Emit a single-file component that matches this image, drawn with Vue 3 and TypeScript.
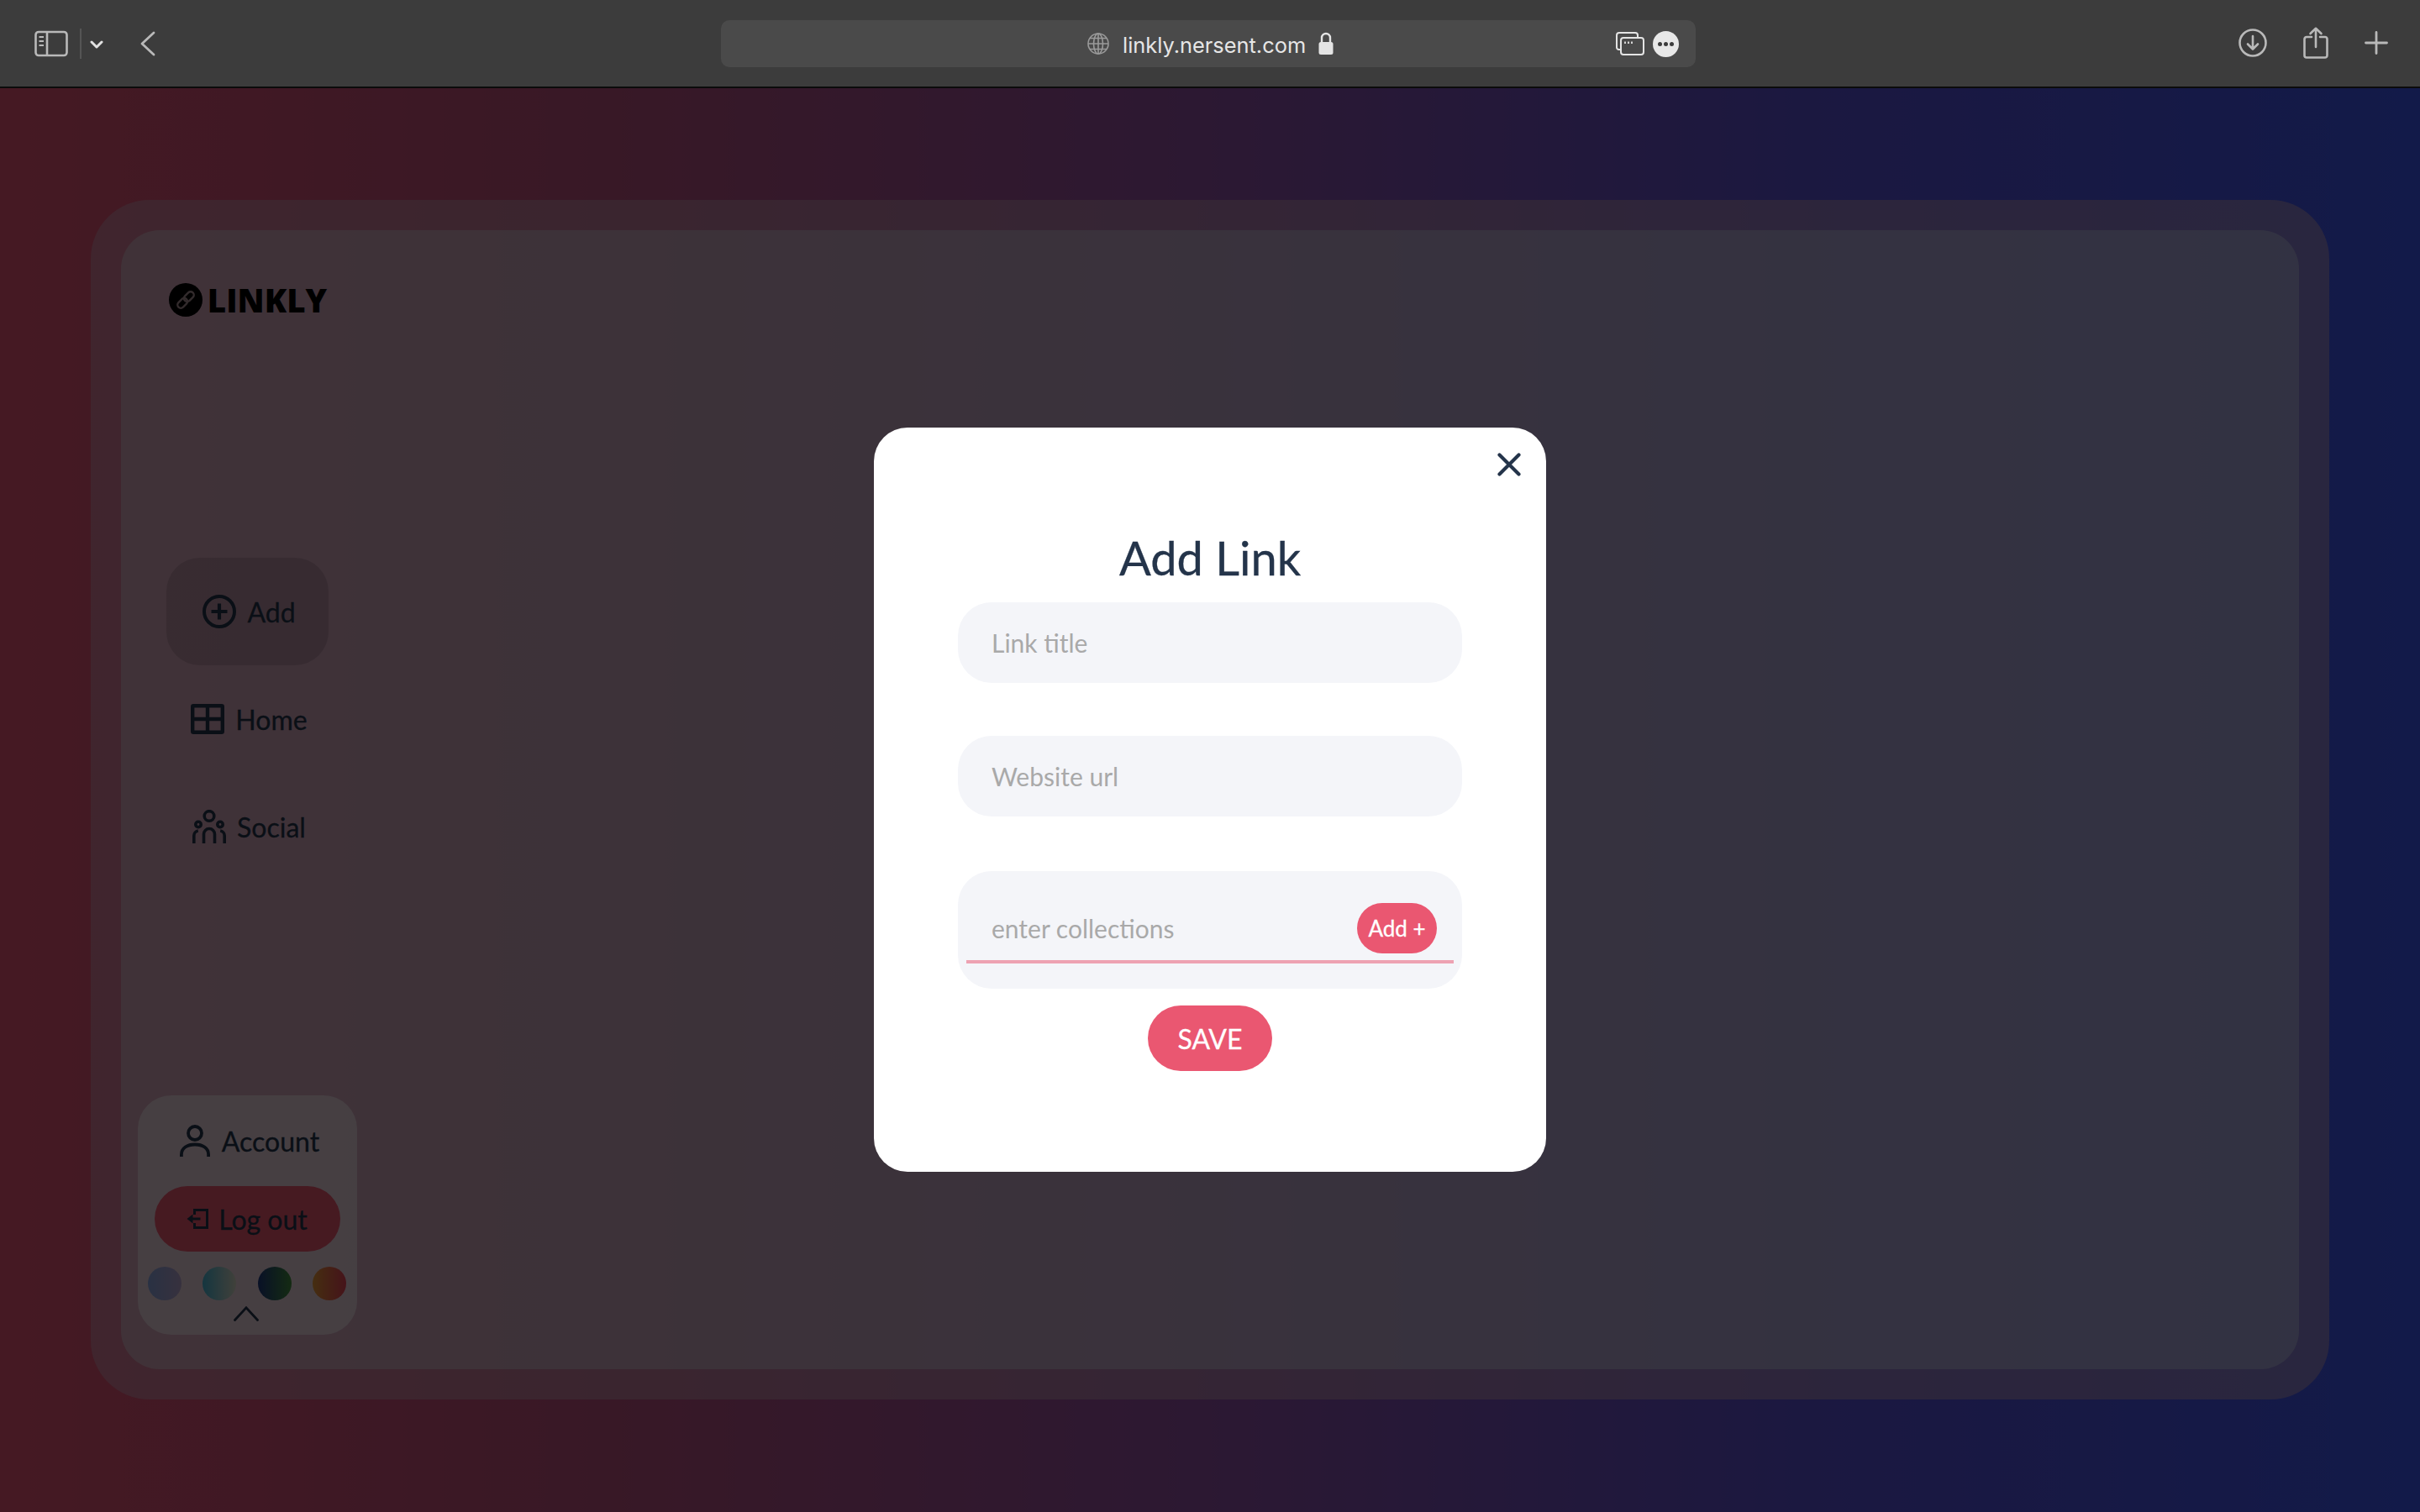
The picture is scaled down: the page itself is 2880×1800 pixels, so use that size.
<script setup lang="ts">
interface NavItem { label: string; icon: 'add' | 'home' | 'social'; active: boolean }
const navItems: NavItem[] = [
  { label: 'Add', icon: 'add', active: true },
  { label: 'Home', icon: 'home', active: false },
  { label: 'Social', icon: 'social', active: false },
]
const themes: string[] = ['theme-a', 'theme-b', 'theme-c', 'theme-d']
</script>

<template>
  <div class="window">
    <header class="toolbar">
      <div class="tb-left">
        <svg class="ic-sidebar" width="40" height="32" viewBox="0 0 40 32" fill="none" stroke="#b9b9b9" stroke-width="2.6">
          <rect x="1.5" y="2" width="37" height="28" rx="3.5" />
          <path d="M15 2V30" />
          <path d="M5.5 8H11M5.5 13H11M5.5 18H11" stroke-width="2" />
        </svg>
        <span class="tb-sep"></span>
        <svg class="ic-drop" width="16" height="10" viewBox="0 0 16 10" fill="none" stroke="#e2e2e2" stroke-width="3" stroke-linecap="round" stroke-linejoin="round">
          <path d="M2 2L8 8L14 2" />
        </svg>
        <svg class="ic-back" width="18" height="30" viewBox="0 0 18 30" fill="none" stroke="#b9b9b9" stroke-width="2.8" stroke-linecap="round" stroke-linejoin="round">
          <path d="M16 2L2 15L16 28" />
        </svg>
      </div>
      <div class="addr">
        <svg class="ic-globe" width="26" height="26" viewBox="0 0 26 26" fill="none" stroke="#9a9a9a" stroke-width="1.6">
          <circle cx="13" cy="13" r="12" />
          <ellipse cx="13" cy="13" rx="5.5" ry="12" />
          <path d="M13 1V25M1 13H25M3 6.5H23M3 19.5H23" />
        </svg>
        <span class="url">linkly.nersent.com</span>
        <svg class="ic-lock" width="20" height="28" viewBox="0 0 20 28" fill="none">
          <path d="M5 13V7a5 5 0 0 1 10 0v6" stroke="#e4e4e4" stroke-width="2.4" />
          <rect x="1.5" y="12" width="17" height="15" rx="2.5" fill="#e4e4e4" />
        </svg>
        <span class="addr-space"></span>
        <svg class="ic-tabs" width="34" height="28" viewBox="0 0 34 28" fill="none" stroke="#e4e4e4" stroke-width="2">
          <path d="M5 21H3.5A2.5 2.5 0 0 1 1 18.500V4A3 3 0 0 1 4 1H23a3 3 0 0 1 3 3V7" />
          <rect x="6" y="7" width="27" height="20" rx="3" fill="#4a4a4a" />
          <path d="M11 11.500V14M15 11.500V14M19 11.500V14" stroke-width="1.8" />
        </svg>
        <span class="more"><i></i><i></i><i></i></span>
      </div>
      <div class="tb-right">
        <svg width="34" height="34" viewBox="0 0 34 34" fill="none" stroke="#b9b9b9" stroke-width="2.6" stroke-linecap="round" stroke-linejoin="round">
          <circle cx="17" cy="17" r="15.500" />
          <path d="M17 9V24M11 18.500L17 24.500L23 18.500" />
        </svg>
        <svg width="30" height="38" viewBox="0 0 30 38" fill="none" stroke="#b9b9b9" stroke-width="2.6" stroke-linecap="round" stroke-linejoin="round">
          <path d="M10 12H4a2.500 2.500 0 0 0-2.500 2.500V34A2.500 2.500 0 0 0 4 36.500H26a2.500 2.500 0 0 0 2.500-2.500V14.500A2.500 2.500 0 0 0 26 12H20" />
          <path d="M15 2V24M8.500 8L15 1.800L21.500 8" />
        </svg>
        <svg width="28" height="28" viewBox="0 0 28 28" fill="none" stroke="#b9b9b9" stroke-width="2.8" stroke-linecap="round">
          <path d="M14 1.500V26.500M1.500 14H26.500" />
        </svg>
      </div>
    </header>

    <main class="page">
      <section class="outer">
        <div class="inner">
          <aside class="sidebar">
            <div class="logo">
              <span class="logo-mark">
                <svg width="26" height="26" viewBox="0 0 24 24" fill="none" stroke="#a88f94" stroke-width="2.200" stroke-linecap="round">
                  <g transform="rotate(45 12 12)">
                    <rect x="8.400" y="0.800" width="7.200" height="12.400" rx="3.600" />
                    <rect x="8.400" y="10.800" width="7.200" height="12.400" rx="3.600" />
                  </g>
                </svg>
              </span>
              <span class="logo-text">LINKLY</span>
            </div>

            <nav class="nav">
              <a v-for="item in navItems" :key="item.label" class="nav-item" :class="{ active: item.active }">
                <svg v-if="item.icon === 'add'" width="40" height="40" viewBox="0 0 40 40" fill="none" stroke="#24344a" stroke-width="4">
                  <circle cx="20" cy="20" r="18" />
                  <path d="M20 10.500V29.500M10.500 20H29.500" stroke-width="4.200" />
                </svg>
                <svg v-else-if="item.icon === 'home'" width="40" height="36" viewBox="0 0 40 36" fill="none" stroke="#24344a" stroke-width="4.400">
                  <rect x="2.200" y="2.200" width="35.600" height="31.600" rx="1" />
                  <path d="M20 2V34M2 18H38" />
                </svg>
                <svg v-else width="40" height="40" viewBox="0 0 40 40" fill="none" stroke="#24344a" stroke-width="3.600">
                  <circle cx="20" cy="7.500" r="5.800" />
                  <circle cx="7" cy="17.500" r="3.200" />
                  <circle cx="33" cy="17.500" r="3.200" />
                  <path d="M13.500 40V29a6.500 6.500 0 0 1 13 0V40" />
                  <path d="M1.800 40V31a6 6 0 0 1 5-6M38.200 40V31a6 6 0 0 0-5-6" />
                </svg>
                <span>{{ item.label }}</span>
              </a>
            </nav>

            <div class="account">
              <a class="account-row">
                <svg width="36" height="38" viewBox="0 0 36 38" fill="none" stroke="#24344a" stroke-width="3.800">
                  <circle cx="18" cy="10" r="8" />
                  <path d="M1.900 38V35.500C1.900 27.500 9 23.500 18 23.500S34.100 27.500 34.100 35.500V38" />
                </svg>
                <span>Account</span>
              </a>
              <button class="logout">
                <svg width="26" height="24" viewBox="0 0 26 24" fill="none" stroke="#24344a" stroke-width="3">
                  <path d="M9.500 7V1.500H24.500V22.500H9.500V17" />
                  <path d="M6 12H16.500" />
                  <path d="M0.500 12L7.500 6.500V17.500Z" fill="#24344a" stroke="none" />
                </svg>
                <span>Log out</span>
              </button>
              <div class="themes">
                <span v-for="t in themes" :key="t" class="dot" :class="t"></span>
              </div>
              <svg class="chev" width="30" height="18" viewBox="0 0 30 18" fill="none" stroke="#24344a" stroke-width="2.800" stroke-linecap="round">
                <path d="M1.500 16.500L15 1.800L28.500 16.500" />
              </svg>
            </div>
          </aside>
        </div>
      </section>

      <div class="overlay">
        <form class="modal" @submit.prevent>
          <svg class="close" width="28" height="28" viewBox="0 0 28 28" fill="none" stroke="#24344a" stroke-width="4.200" stroke-linecap="round">
            <path d="M2.500 2.500L25.500 25.500M25.500 2.500L2.500 25.500" />
          </svg>
          <h1 class="title">Add Link</h1>
          <input class="field" type="text" placeholder="Link title" />
          <input class="field second" type="text" placeholder="Website url" />
          <div class="collections">
            <div class="coll-row">
              <input class="coll-input" type="text" placeholder="enter collections" />
              <button class="coll-add" type="button">Add +</button>
            </div>
            <div class="coll-line"></div>
          </div>
          <button class="save" type="submit">SAVE</button>
        </form>
      </div>
    </main>
  </div>
</template>

<style scoped>
.window {
  width: 2880px;
  height: 1800px;
  display: flex;
  flex-direction: column;
  overflow: hidden;
  font-family: Lato, "Noto Sans", sans-serif;
}

.toolbar {
  height: 105px;
  flex: none;
  box-sizing: border-box;
  background: #3c3c3c;
  border-bottom: 2px solid #0b0b0b;
  display: grid;
  grid-template-columns: 858px 1160px 1fr;
  align-items: center;
  padding-top: 1px;
}
.tb-left { display: flex; align-items: center; padding-left: 41px; margin-top: -1px; }
.tb-sep { width: 2px; height: 36px; background: #555; margin-left: 14px; }
.ic-drop { margin-left: 10px; margin-top: 2px; }
.ic-back { margin-left: 44px; }

.addr {
  height: 56px;
  background: #4a4a4a;
  border-radius: 10px;
  display: flex;
  align-items: center;
  padding-left: 436px;
  padding-right: 20px;
}
.url {
  font-family: Inter, "Liberation Sans", sans-serif;
  font-size: 25.400px;
  color: #e6e6e6;
  margin-left: 16px;
  margin-top: 3px;
  white-space: nowrap;
}
.ic-lock { margin-left: 14px; }
.addr-space { flex: 1; }
.ic-tabs { margin-right: 10px; }
.more {
  width: 31px;
  height: 31px;
  border-radius: 50%;
  background: #e8e8e8;
  display: flex;
  align-items: center;
  justify-content: center;
  gap: 2px;
}
.more i { width: 5px; height: 5px; border-radius: 50%; background: #3c3c3c; }

.tb-right {
  display: flex;
  align-items: center;
  justify-content: flex-end;
  gap: 43px;
  padding-right: 38px;
  margin-top: -2px;
}

.page {
  position: relative;
  flex: 1;
  box-sizing: border-box;
  padding: 133px 108px 134px;
  background: linear-gradient(90deg, #e85575 0%, #bc5080 25%, #9351a9 50%, #5b51d8 75%, #3e58f4 100%);
}
.outer {
  height: 100%;
  box-sizing: border-box;
  padding: 36px;
  border-radius: 70px;
  background: rgba(203, 165, 185, 0.52);
}
.inner {
  height: 100%;
  border-radius: 46px;
  background: rgba(219, 237, 244, 0.38);
  display: flex;
}
.sidebar {
  width: 301px;
  box-sizing: border-box;
  padding: 63px 0 41px;
  display: flex;
  flex-direction: column;
  align-items: center;
  color: #24344a;
  -webkit-text-stroke: 0.3px #24344a;
}
.logo { display: flex; align-items: center; gap: 6px; height: 40px; margin-left: 1px; }
.logo-mark {
  width: 40px;
  height: 40px;
  border-radius: 50%;
  background: #000;
  display: flex;
  align-items: center;
  justify-content: center;
}
.logo-text {
  font-family: "Open Sans", sans-serif;
  font-weight: 800;
  font-size: 38.500px;
  line-height: 40px;
  letter-spacing: 0;
  color: #000;
  -webkit-text-stroke: 0;
}
.nav { margin-top: 287px; display: flex; flex-direction: column; }
.nav-item {
  width: 193px;
  height: 128px;
  border-radius: 40px;
  display: flex;
  align-items: center;
  justify-content: center;
  gap: 13px;
  font-size: 32px;
  padding-left: 4px;
  box-sizing: border-box;
}
.nav-item.active { background: rgba(0, 0, 0, 0.12); }

.account {
  margin-top: auto;
  width: 261px;
  height: 285px;
  box-sizing: border-box;
  border-radius: 40px;
  background: rgba(255, 255, 255, 0.5);
  padding: 35px 13px 0 12px;
  display: flex;
  flex-direction: column;
  align-items: center;
}
.account-row {
  display: flex;
  align-items: center;
  gap: 14px;
  height: 38px;
  font-size: 32px;
  margin-left: 6px;
}
.logout {
  margin-top: 35px;
  width: 221px;
  height: 78px;
  flex: none;
  border: none;
  border-radius: 39px;
  background: #ea5771;
  color: #24344a;
  font: inherit;
  font-size: 32px;
  -webkit-text-stroke: 0.3px #24344a;
  display: flex;
  align-items: center;
  justify-content: center;
  gap: 12px;
}
.themes {
  margin-top: 18px;
  width: 236px;
  display: flex;
  justify-content: space-between;
}
.dot { width: 40px; height: 40px; border-radius: 50%; }
.theme-a { background: linear-gradient(90deg, #8aa6e0, #b8a4d0); }
.theme-b { background: linear-gradient(90deg, #46b4d4, #d8d8c4); }
.theme-c { background: linear-gradient(90deg, #1e3880, #44903f); }
.theme-d { background: linear-gradient(90deg, #e89a38, #e84058); }
.chev { margin-top: 7px; margin-left: -2px; }

.overlay {
  position: absolute;
  inset: 0;
  padding-bottom: 1px;
  background: rgba(0, 0, 0, 0.7);
  display: flex;
  align-items: center;
  justify-content: center;
}
.modal {
  position: relative;
  width: 800px;
  height: 886px;
  box-sizing: border-box;
  border-radius: 40px;
  background: #fff;
  padding: 121px 100px 0;
  display: flex;
  flex-direction: column;
  align-items: center;
}
.close { position: absolute; top: 30px; right: 30px; }
.title {
  margin: 0 0 19px;
  font-size: 56px;
  line-height: 68px;
  font-weight: 400;
  color: #24344a;
  -webkit-text-stroke: 0.3px #24344a;
}
.field {
  width: 600px;
  height: 96px;
  flex: none;
  box-sizing: border-box;
  border: none;
  outline: none;
  border-radius: 40px;
  background: #f4f5f9;
  padding: 0 40px;
  font-family: inherit;
  font-size: 30px;
  color: #24344a;
}
.field.second { margin-top: 63px; }
.field::placeholder, .coll-input::placeholder { color: #a9a9a9; opacity: 1; }
.collections {
  margin-top: 65px;
  width: 600px;
  height: 140px;
  box-sizing: border-box;
  border-radius: 40px;
  background: #f4f5f9;
  padding: 38px 10px 0;
}
.coll-row { display: flex; align-items: center; padding: 0 20px 0 30px; height: 60px; }
.coll-input {
  flex: 1;
  min-width: 0;
  border: none;
  outline: none;
  background: transparent;
  padding: 0;
  font-family: inherit;
  font-size: 30px;
  color: #24344a;
}
.coll-add {
  width: 95px;
  height: 60px;
  flex: none;
  padding: 0;
  border: none;
  border-radius: 30px;
  background: #ea5771;
  color: #fff;
  font-family: inherit;
  font-size: 26px;
  -webkit-text-stroke: 0.3px #fff;
}
.coll-line { height: 4px; margin-top: 8px; background: #eda2b2; }
.save {
  margin-top: 20px;
  width: 148px;
  height: 78px;
  flex: none;
  border: none;
  border-radius: 39px;
  background: #ea5771;
  color: #fff;
  font-family: inherit;
  font-size: 32px;
  -webkit-text-stroke: 0.3px #fff;
  padding: 0;
}
</style>

<style>
html, body { margin: 0; padding: 0; background: #000; }
</style>
